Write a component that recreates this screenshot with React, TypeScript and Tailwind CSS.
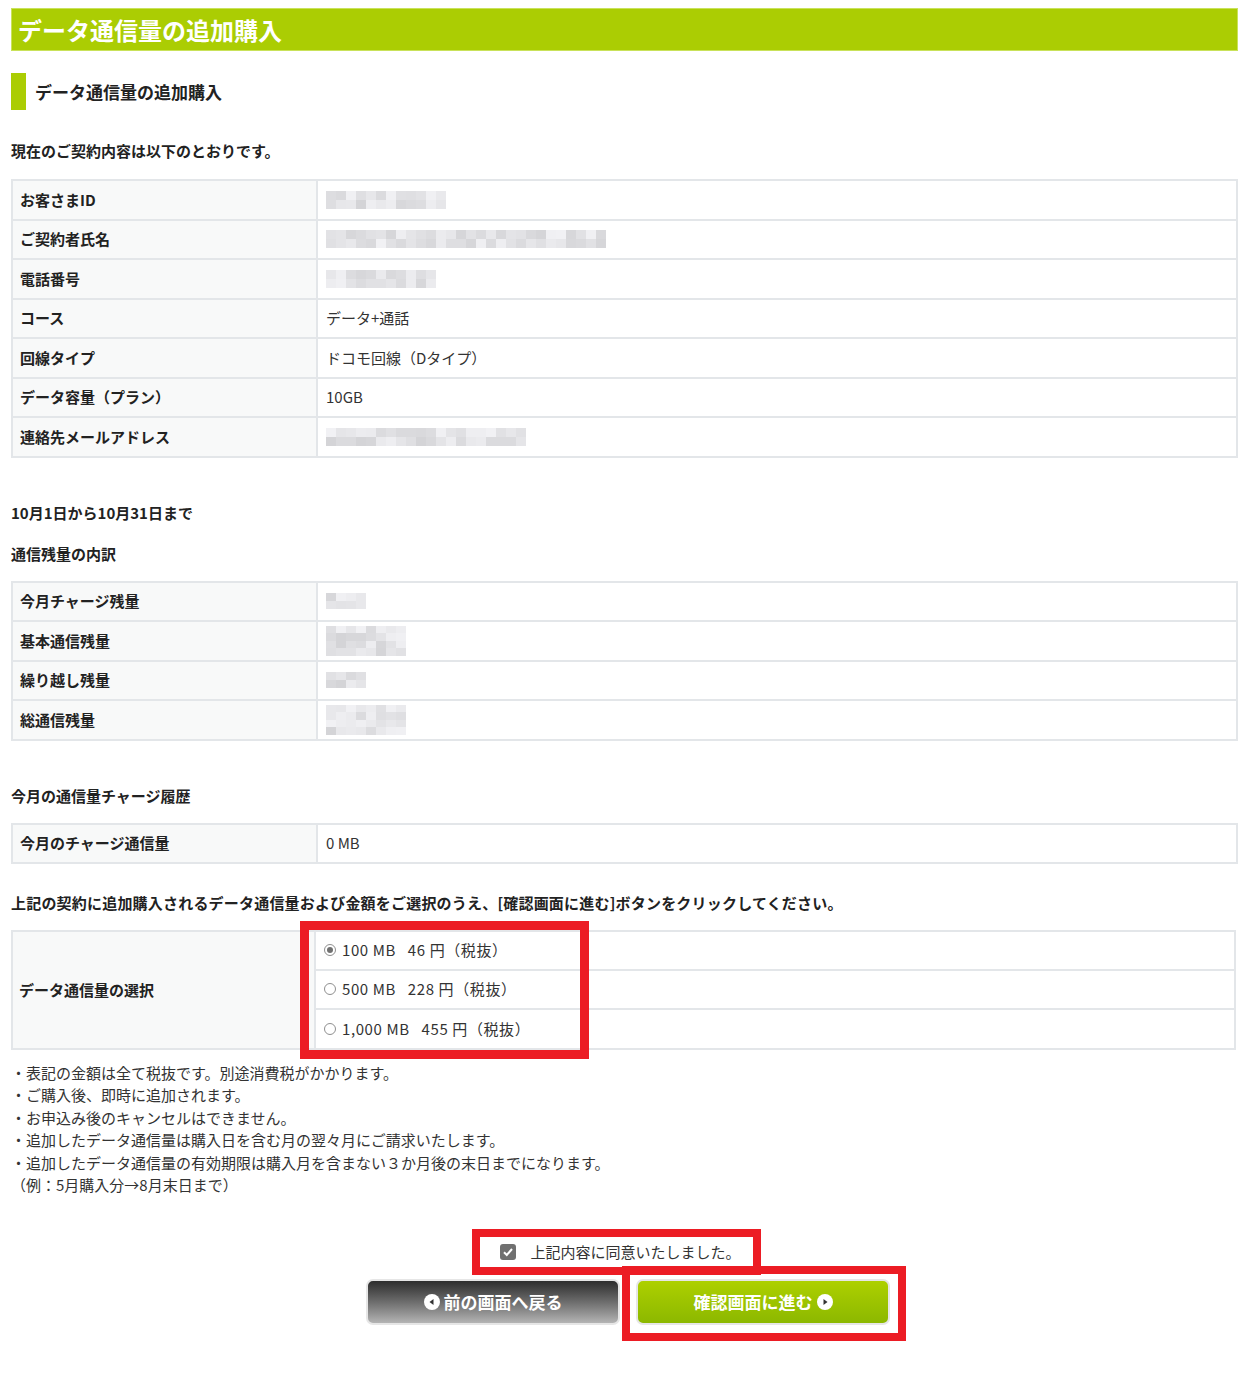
import React from "react";

type Cell = { label: string; value: React.ReactNode };

function Mosaic({ w, h, seed }: { w: number; h: number; seed: number }) {
  const cols = Math.ceil(w / 10);
  const rows = Math.ceil(h / 9);
  let s = seed;
  const cells: string[] = [];
  for (let i = 0; i < cols * rows; i++) {
    s = (s * 9301 + 49297) % 233280;
    const g = 212 + Math.floor((s / 233280) * 30);
    cells.push(`rgb(${g},${g},${g + 3})`);
  }
  return (
    <div className="flex flex-wrap overflow-hidden" style={{ width: cols * 10, height: h }}>
      {cells.map((c, i) => (
        <div key={i} style={{ background: c, width: 10, height: h / rows }} />
      ))}
    </div>
  );
}

function InfoTable({ rows }: { rows: Cell[] }) {
  return (
    <div className="border-2 border-[#e3e6e9]">
      {rows.map((r, i) => (
        <div
          key={r.label}
          className={
            i === 0
              ? "flex h-[37.5px]"
              : "flex h-[39.5px] border-t-2 border-[#e3e6e9]"
          }
        >
          <div className="w-[305px] shrink-0 bg-[#f8f9f9] border-r-2 border-[#e3e6e9] px-[7px] flex items-center font-bold text-[#222]">
            {r.label}
          </div>
          <div className="flex-1 px-[8px] flex items-center text-[#333]">{r.value}</div>
        </div>
      ))}
    </div>
  );
}

function Radio({ checked }: { checked?: boolean }) {
  return (
    <span className="w-[12px] h-[12px] rounded-full border border-[#8f8f8f] bg-white flex items-center justify-center mr-[6px]">
      {checked && <span className="w-[6px] h-[6px] rounded-full bg-[#707070]" />}
    </span>
  );
}

export default function App() {
  const contract: Cell[] = [
    { label: "お客さまID", value: <Mosaic w={112} h={18} seed={3} /> },
    { label: "ご契約者氏名", value: <Mosaic w={272} h={18} seed={7} /> },
    { label: "電話番号", value: <Mosaic w={104} h={18} seed={11} /> },
    { label: "コース", value: "データ+通話" },
    { label: "回線タイプ", value: "ドコモ回線（Dタイプ）" },
    { label: "データ容量（プラン）", value: "10GB" },
    { label: "連絡先メールアドレス", value: <Mosaic w={200} h={18} seed={19} /> },
  ];
  const remain: Cell[] = [
    { label: "今月チャージ残量", value: <Mosaic w={40} h={16} seed={23} /> },
    { label: "基本通信残量", value: <Mosaic w={72} h={30} seed={29} /> },
    { label: "繰り越し残量", value: <Mosaic w={40} h={16} seed={31} /> },
    { label: "総通信残量", value: <Mosaic w={80} h={30} seed={37} /> },
  ];
  const options = [
    "100 MB\u00a0\u00a0 46 円（税抜）",
    "500 MB\u00a0\u00a0 228 円（税抜）",
    "1,000 MB\u00a0\u00a0 455 円（税抜）",
  ];

  return (
    <div className="w-[1259px] min-h-[1374px] bg-white pt-[8px] text-[15px] leading-[20px] text-[#333] font-['Noto_Sans_CJK_JP','Noto_Sans',sans-serif]">
      <div className="ml-[11px] w-[1227px]">
        {/* page header */}
        <div className="h-[43px] bg-[#abcd03] border border-[#c9e25a] flex items-center px-[6px] text-[24px] font-bold text-white">
          データ通信量の追加購入
        </div>

        <div className="mt-[22px] h-[37px] flex items-center">
          <div className="w-[15px] h-full bg-[#abcd03]" />
          <div className="ml-[9px] text-[17px] font-bold text-[#222]">データ通信量の追加購入</div>
        </div>

        <p className="mt-[31px] font-bold text-[#222]">現在のご契約内容は以下のとおりです。</p>
        <div className="mt-[18px]">
          <InfoTable rows={contract} />
        </div>

        <p className="mt-[45px] font-bold text-[#222]">10月1日から10月31日まで</p>
        <p className="mt-[21px] font-bold text-[#222]">通信残量の内訳</p>
        <div className="mt-[17px]">
          <InfoTable rows={remain} />
        </div>

        <p className="mt-[45px] font-bold text-[#222]">今月の通信量チャージ履歴</p>
        <div className="mt-[17px]">
          <InfoTable rows={[{ label: "今月のチャージ通信量", value: "0 MB" }]} />
        </div>

        <p className="mt-[29px] font-bold text-[#222] tracking-[0.2px]">
          上記の契約に追加購入されるデータ通信量および金額をご選択のうえ、[確認画面に進む]ボタンをクリックしてください。
        </p>

        {/* data selection */}
        <div className="relative mt-[17px] w-[1225px] border-2 border-[#e3e6e9] flex">
          <div className="w-[303px] shrink-0 bg-[#f8f9f9] border-r-2 border-[#e3e6e9] px-[6px] flex items-center font-bold text-[#222]">
            データ通信量の選択
          </div>
          <div className="flex-1">
            {options.map((o, i) => (
              <div
                key={o}
                className={
                  i === 0
                    ? "h-[36.5px] flex items-center px-[8px]"
                    : "h-[39.5px] flex items-center px-[8px] border-t-2 border-[#e3e6e9]"
                }
              >
                <Radio checked={i === 0} />
                <span className="whitespace-pre tracking-[0.6px]">{o}</span>
              </div>
            ))}
          </div>
          <div className="absolute left-[287px] top-[-11px] w-[289px] h-[138px] border-[9px] border-[#ec1c24]" />
        </div>

        <ul className="mt-[12px] leading-[22.5px]">
          <li>・表記の金額は全て税抜です。別途消費税がかかります。</li>
          <li>・ご購入後、即時に追加されます。</li>
          <li>・お申込み後のキャンセルはできません。</li>
          <li>・追加したデータ通信量は購入日を含む月の翌々月にご請求いたします。</li>
          <li>・追加したデータ通信量の有効期限は購入月を含まない３か月後の末日までになります。</li>
          <li>（例：5月購入分→8月末日まで）</li>
        </ul>

        {/* agreement */}
        <div className="mt-[32px] flex justify-center pr-[16px]">
          <div className="border-[8px] border-[#ec1c24] pl-[20px] pr-[12px] py-[4px] flex items-center bg-white">
            <span className="w-[16px] h-[16px] rounded-[3px] bg-[#707070] flex items-center justify-center">
              <svg width="12" height="12" viewBox="0 0 12 12">
                <path d="M2 6.2 L4.8 9 L10 3" fill="none" stroke="white" strokeWidth="2" />
              </svg>
            </span>
            <span className="ml-[14px] text-[15px] leading-[22px] text-[#333]">上記内容に同意いたしました。</span>
          </div>
        </div>

        {/* buttons */}
        <div className="mt-[4px] flex justify-center gap-[16px] pl-[7px]">
          <button className="w-[254px] h-[46px] rounded-[7px] border-2 border-[#e6e6e6] bg-gradient-to-b from-[#2e2e2e] to-[#b4b4b4] flex items-center justify-center text-white font-bold text-[17px]">
            <span className="w-[16px] h-[16px] rounded-full bg-white flex items-center justify-center mr-[4px]">
              <svg width="8" height="8" viewBox="0 0 8 8">
                <path d="M5.5 1 L1.5 4 L5.5 7 Z" fill="#333" />
              </svg>
            </span>
            前の画面へ戻る
          </button>
          <div className="relative">
            <button className="w-[254px] h-[46px] rounded-[7px] border-2 border-[#e6e6e6] bg-gradient-to-b from-[#add000] to-[#8cb800] flex items-center justify-center text-white font-bold text-[17px]">
              確認画面に進む
              <span className="w-[16px] h-[16px] rounded-full bg-white flex items-center justify-center ml-[4px]">
                <svg width="8" height="8" viewBox="0 0 8 8">
                  <path d="M2.5 1 L6.5 4 L2.5 7 Z" fill="#333" />
                </svg>
              </span>
            </button>
            <div className="absolute left-[-14px] top-[-13px] w-[284px] h-[75px] border-[8px] border-[#ec1c24]" />
          </div>
        </div>
      </div>
    </div>
  );
}
